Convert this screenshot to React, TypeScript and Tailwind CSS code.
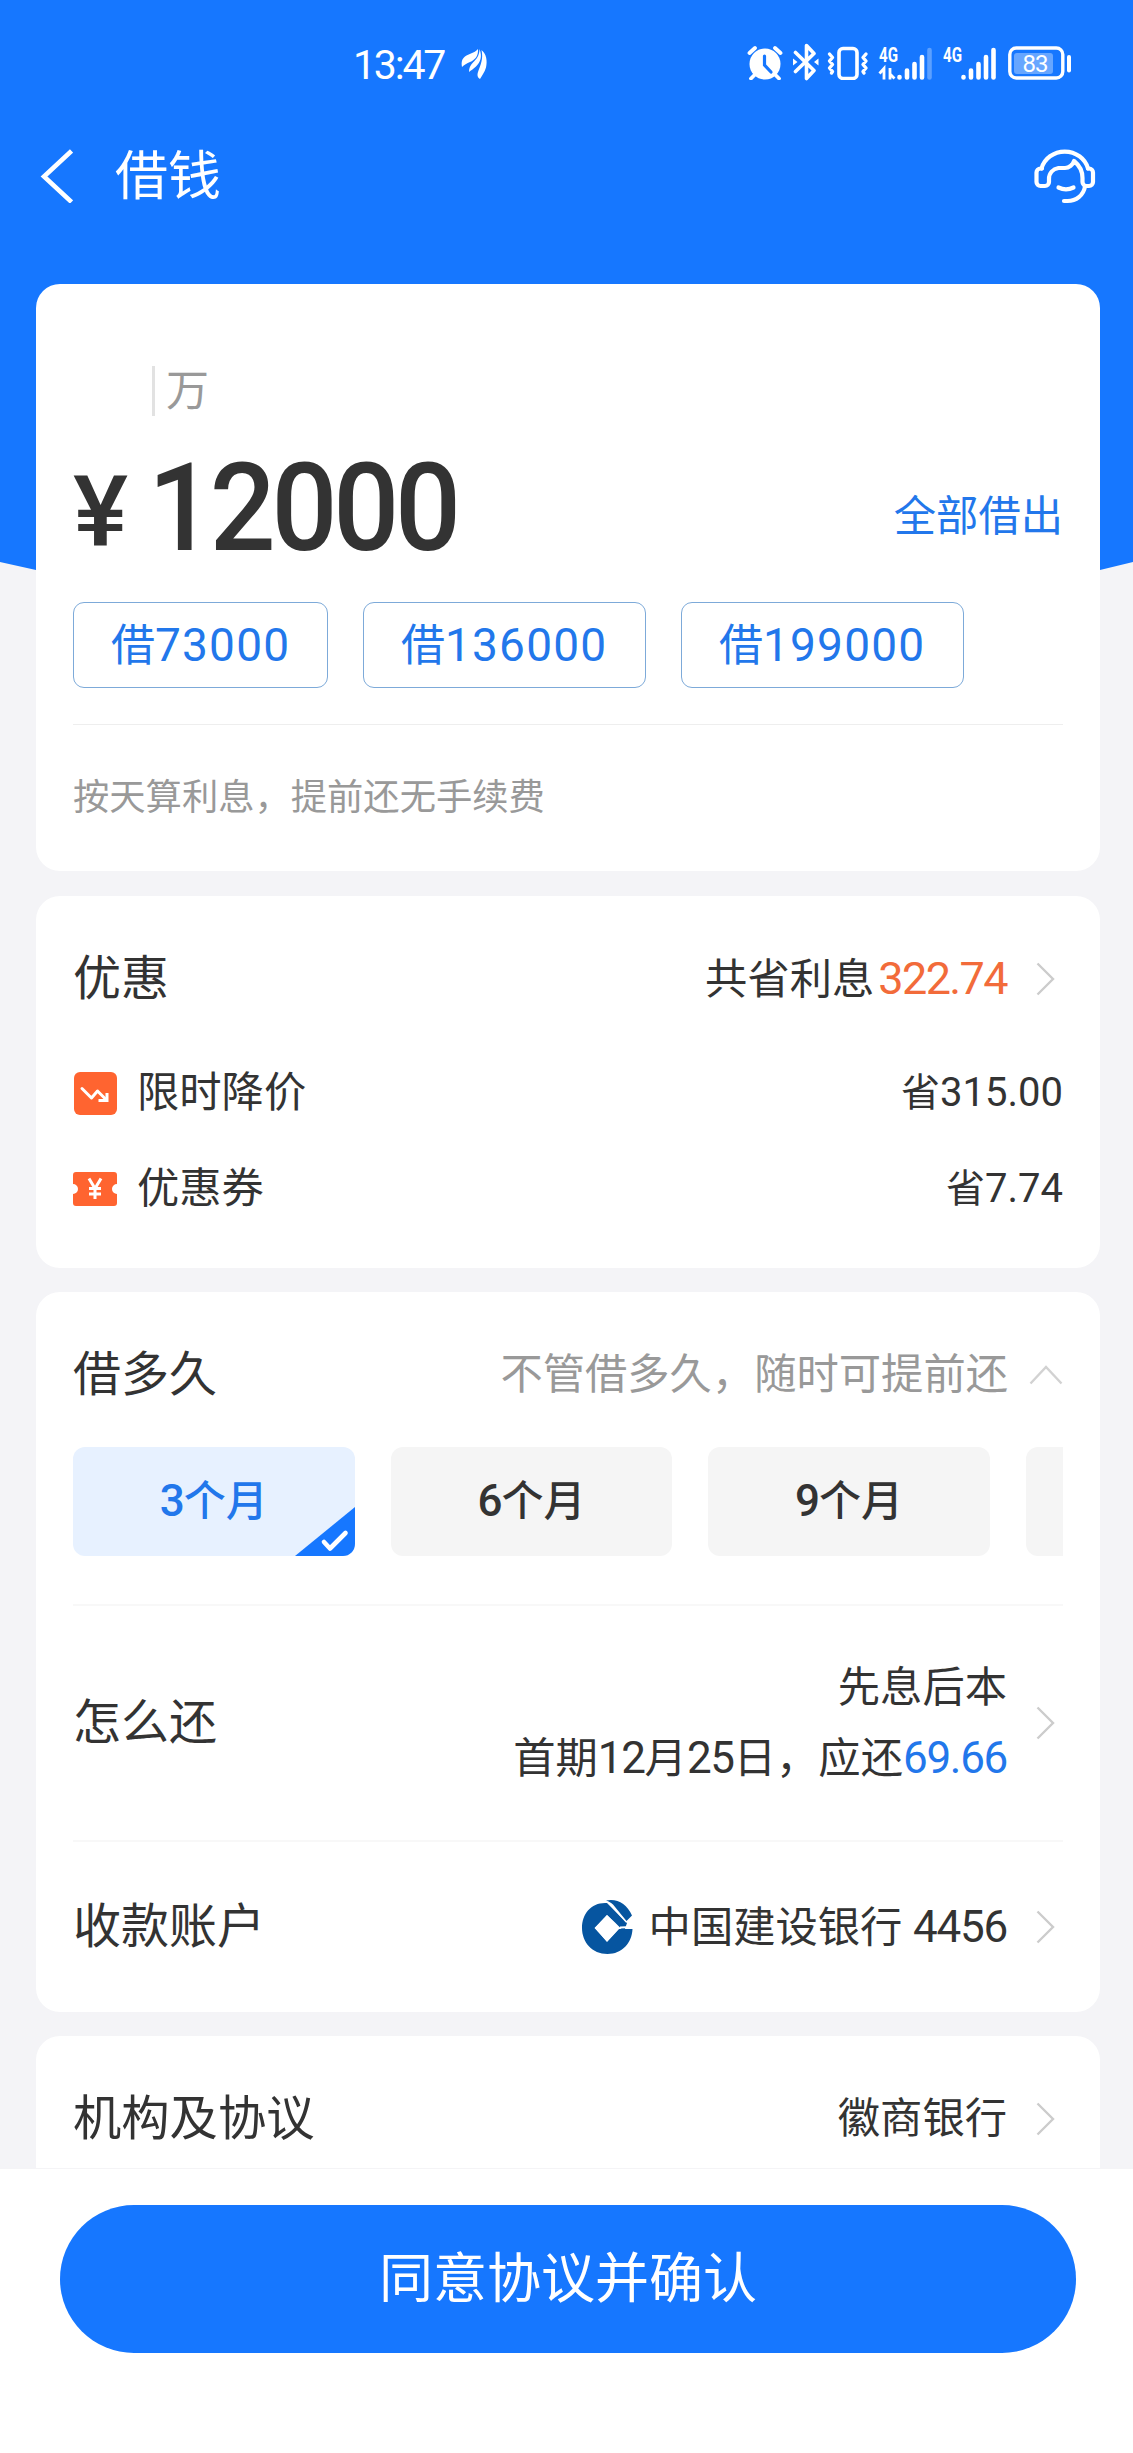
import React, { useState } from 'react';

const fontFamily = "font-['Roboto','Noto_Sans_CJK_SC',sans-serif]";

const quickAmounts = [
  { value: 73000, width: 'w-[255px]' },
  { value: 136000, width: 'w-[283px]' },
  { value: 199000, width: 'w-[283px]' },
];

const terms = [3, 6, 9, 12];

const AlarmIcon: React.FC = () => (
  <svg width="36" height="36" viewBox="0 0 36 36" fill="none">
    <circle cx="18" cy="20" r="15.5" fill="white" />
    <path d="M2.5 9 8 4M33.5 9 28 4M7 31.500l-3 3M29 31.500l3 3" stroke="white" strokeWidth="3.8" strokeLinecap="round" />
    <path d="M17.5 12v9l6.5 7" stroke="#1677ff" strokeWidth="3.2" strokeLinecap="round" />
  </svg>
);

const BluetoothIcon: React.FC = () => (
  <svg width="26" height="38" viewBox="0 0 26 38" fill="none">
    <path d="M2.5 9.5 21 27.5l-7.5 8V2.5l7.5 8L2.5 28.5" stroke="white" strokeWidth="3.6" strokeLinejoin="round" strokeLinecap="round" />
    <path d="M0 15.500 4.500 19 0 22.500zM25.500 15.500 21 19l4.500 3.500z" fill="white" />
  </svg>
);

const VibrateIcon: React.FC = () => (
  <svg width="42" height="36" viewBox="0 0 42 36" fill="none" stroke="white" strokeLinecap="round" strokeLinejoin="round">
    <rect x="12" y="4.500" width="18" height="30" rx="4" strokeWidth="3.600" />
    <path d="M2.500 10l3 3.500-3 3.500 3 3.500-3 3.500 3 3.500-1 1.500M39 10l-3 3.500 3 3.500-3 3.500 3 3.500-3 3.500 1 1.500" strokeWidth="3.400" />
  </svg>
);

interface SignalIconProps {
  weak?: boolean;
}

const SignalIcon: React.FC<SignalIconProps> = ({ weak }) => (
  <svg className="overflow-visible" width="54" height="36" viewBox="0 0 54 36" fill="none">
    <text x="0" y="18" fontSize="20.5" fontWeight="700" textLength="19" lengthAdjust="spacingAndGlyphs" fill="white">4G</text>
    {weak && <path d="M.5 29.500 5 24.500v11M15.500 34.500l-4.500-4.500m0 5.500V24" stroke="white" strokeWidth="2.800" />}
    <g stroke="white" strokeWidth="4.600" strokeLinecap="round">
      <path d="M20.500 33v.5M28 26.500v7M35.500 20v13.500M43 13v20.500" />
      <path d="M50.500 6v27.500" strokeOpacity={weak ? 0.3 : 1} />
    </g>
  </svg>
);

const BatteryIcon: React.FC = () => (
  <svg width="64" height="36" viewBox="0 0 64 36" fill="none">
    <rect x="1.800" y="4" width="53" height="30" rx="6.500" stroke="white" strokeWidth="3.400" />
    <rect x="6" y="9" width="39" height="21" rx="3" fill="white" fillOpacity="0.35" />
    <path d="M61 13v13.500" stroke="white" strokeWidth="4" strokeLinecap="round" />
    <text x="14.500" y="27.800" fontSize="24" textLength="26" fill="white">83</text>
  </svg>
);

const StatusBar: React.FC = () => (
  <div className="flex h-[128px] items-start pl-[353px] pr-[61px] pt-[44px]">
    <div className="mt-px h-[40px] w-[95px] whitespace-nowrap text-[41px] leading-[40px] tracking-[-2.2px] text-white">13:47</div>
    <svg className="ml-[13px] mt-[4px]" width="28" height="32" viewBox="0 0 28 32" fill="white">
      <path d="M1 19C0 14 1 11 4 8.500 8 5.500 13 5.500 17 1c.500 7-3 11-8 13-3 1.500-6 2.500-8 5z" />
      <path d="M8 24c0-4 1-6.500 4-9.500 3.500-3.500 6.500-7 6.500-13.500 3 8 1 13-3.500 17.500-3 2.500-5 4-7 5.500z" />
      <path d="M19 31c-3-2-3-4.500-1.500-8.500C19.500 17 22.500 11 20.500 2c5 4 6 11 4.500 17.500-1.500 5-4 8-6 11.500z" />
    </svg>
    <div className="ml-auto flex h-[36px] items-center">
      <AlarmIcon />
      <div className="ml-[10px]"><BluetoothIcon /></div>
      <div className="ml-[8px]"><VibrateIcon /></div>
      <div className="ml-[10px]"><SignalIcon weak /></div>
      <div className="ml-[10px]"><SignalIcon /></div>
      <div className="ml-[11px]"><BatteryIcon /></div>
    </div>
  </div>
);

const NavBar: React.FC = () => (
  <div className="flex h-[96px] items-center pl-[39px] pr-[37px] text-white">
    <svg width="34" height="54" viewBox="0 0 34 54" fill="none">
      <path d="M32.500 2 5 27.500 32.500 53" stroke="white" strokeWidth="4.600" />
    </svg>
    <h1 className="ml-[42px] mt-[2px] text-[53px] leading-[60px]">借钱</h1>
    <svg className="ml-auto" width="62" height="60" viewBox="0 0 62 60" fill="none" stroke="white" strokeWidth="4.200" strokeLinecap="round" strokeLinejoin="round">
      <path d="M7.500 22.500a24 22.500 0 0 1 46.500 0" />
      <path d="M8 22.500H6.500a4 4 0 0 0-4 4V36a4 4 0 0 0 4 4H11a4 4 0 0 0 4-4v-3c0-6 4-10 9.500-11H31c4 0 8-3.500 9-7 5 4 8.500 10 8.500 17v4a4 4 0 0 0 4 4H55a4 4 0 0 0 4-4v-9.500a4 4 0 0 0-4-4h-1" />
      <path d="M51 40.500c-1.500 9-9 14.500-17.500 14.500H30M24.500 41.500c5 2.500 10 2.500 15 0" />
    </svg>
  </div>
);

const Chevron: React.FC = () => (
  <svg className="ml-[29px] mr-[8px] shrink-0" width="19" height="34" viewBox="0 0 19 34" fill="none">
    <path d="M1.500 1.500 17 17 1.500 32.500" stroke="#cccccc" strokeWidth="2.400" />
  </svg>
);

const PriceDropIcon: React.FC = () => (
  <svg className="ml-px" width="43" height="43" viewBox="0 0 43 43" fill="none">
    <rect width="43" height="43" rx="6" fill="#ff6430" />
    <path d="M8 16.500 17.500 26l6-7 9 9" stroke="white" strokeWidth="3" strokeLinecap="round" strokeLinejoin="round" />
    <path d="M33 21v7.500h-8.500" stroke="white" strokeWidth="3" />
  </svg>
);

const CouponIcon: React.FC = () => (
  <svg width="44" height="34" viewBox="0 0 44 34" fill="none">
    <path d="M3 0h38a3 3 0 0 1 3 3v9a5 5 0 0 0 0 10v9a3 3 0 0 1-3 3H3a3 3 0 0 1-3-3v-9a5 5 0 0 0 0-10V3a3 3 0 0 1 3-3z" fill="#ff6430" />
    <path d="m16 6.500 6 10 6-10M22 16v11M16 16.500h12M16 22h12" stroke="white" strokeWidth="3" />
  </svg>
);

const BankLogo: React.FC = () => (
  <svg width="52" height="56" viewBox="0 0 52 56" fill="none">
    <path d="M24 4C10 4 1 15 1 29s10 26 25.500 26C41 55 51 44 51.500 30H38L26 43 14 29 26 16l8 7.500 9 9L46 24 26 4z" fill="#0655a0" />
    <path d="M26 16 38.500 29 26 42.500 13.500 29z" fill="white" />
    <path d="M27 2.500 46 23" stroke="white" strokeWidth="2.500" />
    <path d="M25 1.500C36-1 46 5 51 16.500l-5.500 5.500L32 5.500C30 3.500 28 2.500 25 1.500z" fill="#0655a0" />
    <path d="M39 28.500 52 28" stroke="white" strokeWidth="2" />
  </svg>
);

const App: React.FC = () => {
  const [amount, setAmount] = useState(12000);
  const [term, setTerm] = useState(3);

  return (
    <div className={`relative flex h-[2453px] w-[1133px] flex-col overflow-hidden bg-[#f4f4f7] text-[#333333] ${fontFamily}`}>
      <div className="absolute left-0 top-0 h-[600px] w-full bg-[#1677ff] [clip-path:polygon(0_0,100%_0,100%_562px,1100px_570px,36px_570px,0_562px)]" />

      <div className="relative flex h-[284px] shrink-0 flex-col">
        <StatusBar />
        <NavBar />
      </div>

      <main className="relative ml-[36px] mr-[33px] flex h-[1884px] flex-col overflow-hidden">
        <section className="h-[587px] shrink-0 rounded-[24px] bg-white px-[37px] pt-[82px]">
          <div className="flex h-[50px] items-center pl-[79px]">
            <div className="h-[50px] w-[3px] bg-[#e2e2e2]" />
            <span className="ml-[11px] text-[43px] leading-[48px] text-[#999999]">万</span>
          </div>
          <div className="mt-[32px] flex h-[120px] items-center justify-between">
            <div className="flex items-center font-medium leading-[120px]">
              <span className="w-[75px] origin-left scale-x-[1.06] pt-[8px] text-[98px]">¥</span>
              <span className="origin-left scale-x-[0.944] text-[123px] tracking-[-4.500px]">{amount}</span>
            </div>
            <button className="mt-[18px] text-[42.300px] leading-[50px] text-[#2277eb]" onClick={() => setAmount(199000)}>全部借出</button>
          </div>
          <div className="mt-[34px] flex gap-[35px]">
            {quickAmounts.map(item => (
              <button
                key={item.value}
                onClick={() => setAmount(item.value)}
                className={`flex h-[86px] items-center rounded-[11px] border border-[#7daad9] pl-[37px] text-[#2277eb] ${item.width}`}
              >
                <span className="text-[44px] leading-[84px]">借<span className="text-[46px] tracking-[1.2px]">{item.value}</span></span>
              </button>
            ))}
          </div>
          <div className="mt-[36px] h-px bg-[#eeeeee]" />
          <p className="mt-[48px] text-[36.300px] leading-[50px] text-[#999999]">按天算利息，提前还无手续费</p>
        </section>

        <section className="mt-[25px] h-[372px] shrink-0 rounded-[24px] bg-white px-[37px] pt-[43px]">
          <div className="flex h-[80px] items-center">
            <h2 className="text-[48px]">优惠</h2>
            <div className="ml-auto text-[42.300px]">共省利息<span className="ml-[4px] text-[45px] tracking-[-1.6px] text-[#f26b3a]">322.74</span></div>
            <Chevron />
          </div>
          <div className="mt-[44px] flex h-[60px] items-center">
            <PriceDropIcon />
            <span className="ml-[20px] text-[42.300px]">限时降价</span>
            <span className="ml-auto text-[39px]">省<span className="text-[40px]">315.00</span></span>
          </div>
          <div className="mt-[36px] flex h-[60px] items-center">
            <CouponIcon />
            <span className="ml-[20px] text-[42.300px]">优惠券</span>
            <span className="ml-auto text-[39px]">省<span className="text-[40px]">7.74</span></span>
          </div>
        </section>

        <section className="mt-[24px] h-[720px] shrink-0 rounded-[24px] bg-white px-[37px] pt-[43px]">
          <div className="flex h-[80px] items-center">
            <h2 className="text-[48px]">借多久</h2>
            <span className="ml-auto text-[42.300px] text-[#999999]">不管借多久，随时可提前还</span>
            <svg className="ml-[21px]" width="34" height="20" viewBox="0 0 34 20" fill="none">
              <path d="M1.500 18.500 17 2l15.500 16.500" stroke="#d2d2d2" strokeWidth="2.400" />
            </svg>
          </div>
          <div className="mt-[32px] flex h-[109px] gap-[36px] overflow-hidden">
            {terms.map(t => {
              const active = t === term;
              return (
                <button
                  key={t}
                  onClick={() => setTerm(t)}
                  className={`relative h-[109px] w-[281.600px] shrink-0 overflow-hidden rounded-[12px] pb-[2px] text-[42px] font-medium ${active ? 'bg-[#e7f1ff] text-[#2277eb]' : 'bg-[#f5f5f5]'}`}
                >
                  <span className="text-[44px] tracking-[-1px]">{t}</span>个月
                  {active && (
                    <svg className="absolute bottom-0 right-0" width="60" height="49" viewBox="0 0 60 49" fill="none">
                      <path d="M60 0v49H0z" fill="#1677ff" />
                      <path d="m29 35 6 6.500L50.500 26" stroke="white" strokeWidth="4.600" strokeLinecap="round" strokeLinejoin="round" />
                    </svg>
                  )}
                </button>
              );
            })}
          </div>
          <div className="mt-[48px] h-[2px] bg-[#f8f8f8]" />
          <div className="flex h-[234px] items-center">
            <h2 className="text-[48px]">怎么还</h2>
            <div className="ml-auto text-right text-[42.300px] leading-[70px]">
              <div>先息后本</div>
              <div>首期<span className="text-[44px] tracking-[-1.3px]">12</span>月<span className="text-[44px] tracking-[-1.3px]">25</span>日，应还<span className="text-[44px] tracking-[-1.3px] text-[#2277eb]">69.66</span></div>
            </div>
            <Chevron />
          </div>
          <div className="h-[2px] bg-[#f8f8f8]" />
          <div className="flex h-[170px] items-center">
            <h2 className="text-[48px]">收款账户</h2>
            <div className="ml-auto flex items-center">
              <BankLogo />
              <span className="ml-[16px] text-[42.300px]">中国建设银行 <span className="text-[44px] tracking-[-1.2px]">4456</span></span>
            </div>
            <Chevron />
          </div>
        </section>

        <section className="mt-[24px] h-[200px] shrink-0 rounded-t-[24px] bg-white px-[37px] pt-[43px]">
          <div className="flex h-[80px] items-center">
            <h2 className="text-[48.300px]">机构及协议</h2>
            <span className="ml-auto text-[42.300px]">徽商银行</span>
            <Chevron />
          </div>
        </section>
      </main>

      <footer className="relative h-[285px] shrink-0 border-t border-[#f4f4f6] bg-white pl-[60px] pr-[57px] pt-[36px]">
        <button className="h-[148px] w-full rounded-full bg-[#1677ff] text-[54px] text-white">同意协议并确认</button>
      </footer>
    </div>
  );
};

export default App;
